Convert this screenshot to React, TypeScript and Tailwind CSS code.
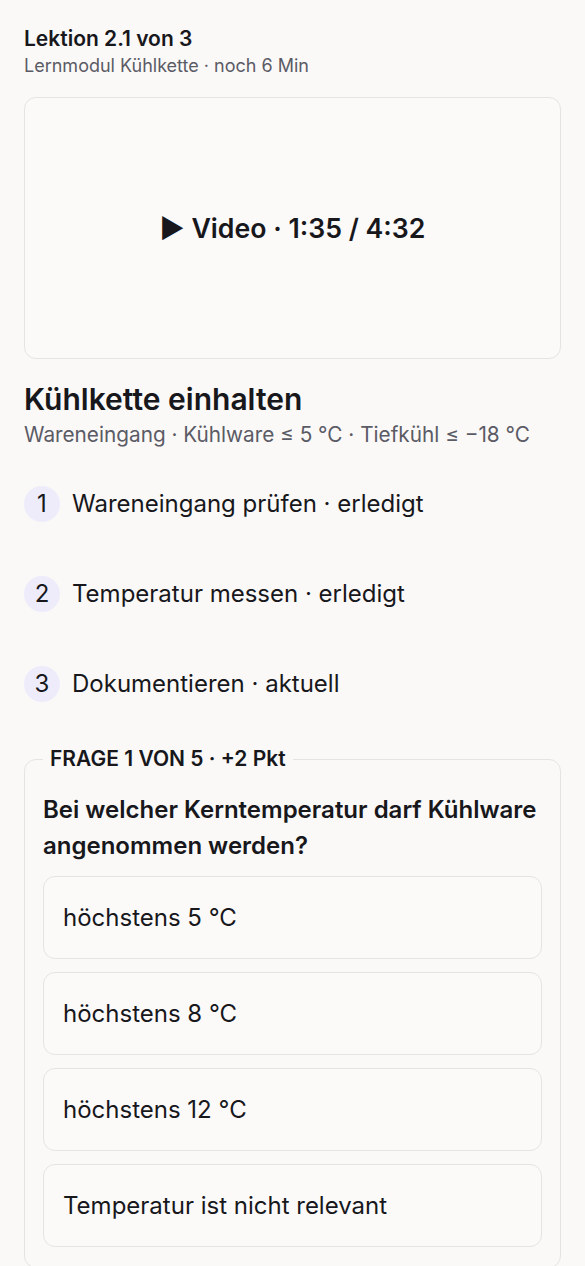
import React from "react";

const steps = [
  { n: 1, t: "Wareneingang prüfen · erledigt" },
  { n: 2, t: "Temperatur messen · erledigt" },
  { n: 3, t: "Dokumentieren · aktuell" },
];

const options = [
  "höchstens 5 °C",
  "höchstens 8 °C",
  "höchstens 12 °C",
  "Temperatur ist nicht relevant",
];

export default function App() {
  return (
    <div
      className="min-h-screen bg-[#faf9f7] px-6 pt-[25px] pb-10 text-[#17171c]"
      style={{ fontFamily: "Inter, 'Noto Sans', sans-serif" }}
    >
      <div className="text-[21px] font-semibold leading-[28px]">Lektion 2.1 von 3</div>
      <div className="text-[18px] leading-[26px] text-[#5b5b66]">Lernmodul Kühlkette · noch 6 Min</div>

      <div className="mt-[18px] flex h-[262px] items-center justify-center rounded-xl border border-[#e6e4e1] bg-[#fbfaf9]">
        <span className="text-[26.7px] font-semibold">▶ Video · 1:35 / 4:32</span>
      </div>

      <h1 className="mt-[22px] text-[30px] font-semibold leading-[36px]">Kühlkette einhalten</h1>
      <div className="mt-1 text-[20.75px] leading-[28px] text-[#5b5b66]">Wareneingang · Kühlware ≤ 5 °C · Tiefkühl ≤ −18 °C</div>

      <div className="mt-[37px] flex flex-col gap-[54px]">
        {steps.map((s) => (
          <div key={s.n} className="flex items-center gap-3">
            <div className="flex h-9 w-9 items-center justify-center rounded-full bg-[#eeecfb] text-[24px]">
              {s.n}
            </div>
            <div className="text-[24px] leading-[36px]">{s.t}</div>
          </div>
        ))}
      </div>

      <fieldset className="mt-[43px] rounded-xl border border-[#e6e4e1] px-[18px] pb-5">
        <legend className="px-[7px] text-[21px] font-semibold leading-[28px]">FRAGE 1 VON 5 · +2 Pkt</legend>
        <div className="mt-[19px] text-[24px] font-semibold leading-[36px]">
          Bei welcher Kerntemperatur darf Kühlware angenommen werden?
        </div>
        <div className="mt-3 flex flex-col gap-[13px]">
          {options.map((o) => (
            <div
              key={o}
              className="flex h-[83px] items-center rounded-xl border border-[#e6e4e1] bg-[#fbfaf9] px-[19px] text-[24px]"
            >
              {o}
            </div>
          ))}
        </div>
      </fieldset>
    </div>
  );
}
